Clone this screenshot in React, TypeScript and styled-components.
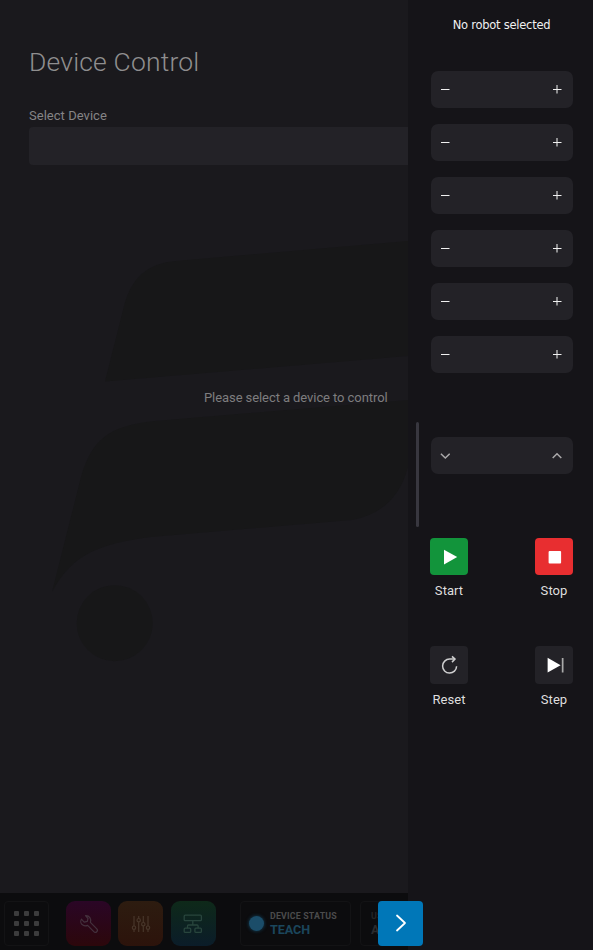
import React from "react";
import styled, { createGlobalStyle } from "styled-components";

const GlobalStyle = createGlobalStyle`
  * { box-sizing: border-box; }
  html, body { margin: 0; background: #151418; }
  body { font-family: Roboto, "Liberation Sans", sans-serif; overflow: hidden; }
  svg { display: block; }
`;

const Screen = styled.div`
  display: grid;
  grid-template-columns: 408px 185px;
  width: 593px;
  height: 950px;
  position: relative;
  overflow: hidden;
`;

const Workspace = styled.div`
  display: flex;
  flex-direction: column;
  min-width: 0;
  overflow: hidden;
`;

const Main = styled.main`
  position: relative;
  isolation: isolate;
  height: 893px;
  padding: 43px 0 0 29px;
  background: #1a191d;
  display: flex;
  flex-direction: column;
`;

const Watermark = styled.svg`
  position: absolute;
  inset: 0;
  z-index: -1;
`;

const Title = styled.h1`
  margin: 0;
  height: 63px;
  line-height: 38px;
  font-size: 26.5px;
  font-weight: 300;
  letter-spacing: 0.17px;
  color: #8f8e8f;
  white-space: nowrap;
`;

const Label = styled.label`
  height: 21px;
  line-height: 20px;
  font-size: 13px;
  letter-spacing: 0.03px;
  color: #858486;
`;

const DeviceSelect = styled.div`
  height: 38px;
  border-radius: 4px 0 0 4px;
  background: #232227;
`;

const Prompt = styled.p`
  margin: 223px 0 0 175px;
  line-height: 20px;
  font-size: 13px;
  letter-spacing: -0.08px;
  color: #7e7d7f;
  white-space: nowrap;
`;

const Taskbar = styled.footer`
  display: flex;
  align-items: flex-start;
  height: 57px;
  padding: 8px 0 0 4px;
  background: #0c0c0e;
`;

const Launcher = styled.div`
  display: grid;
  flex: none;
  grid-template-columns: repeat(3, 5px);
  grid-auto-rows: 5px;
  gap: 5px;
  place-content: center;
  width: 45px;
  height: 45px;
  margin-right: 17px;
  border: 1px solid #131315;
  border-radius: 4px;
`;

const Dot = styled.i`
  background: #3c3c3d;
  border-radius: 1px;
`;

const AppTile = styled.div<{ $from: string; $to: string }>`
  display: grid;
  flex: none;
  place-items: center;
  width: 45px;
  height: 45px;
  margin-right: 7.4px;
  border-radius: 9px;
  background: linear-gradient(${(p) => p.$from}, ${(p) => p.$to});
`;

const StatusCard = styled.div<{ $width: number; $margin: number }>`
  display: flex;
  align-items: center;
  flex: none;
  width: ${(p) => p.$width}px;
  height: 45px;
  margin-left: ${(p) => p.$margin}px;
  padding-left: 8px;
  border: 1px solid #131315;
  border-radius: 4px;
`;

const Lamp = styled.span`
  width: 15px;
  height: 15px;
  border-radius: 50%;
  background: #1b4d69;
  box-shadow: 0 0 3px 1px #102c3c;
  margin-right: 6px;
`;

const StatusText = styled.div<{ $dim?: boolean }>`
  display: flex;
  flex-direction: column;
  font-weight: 700;
  white-space: nowrap;
  opacity: ${(p) => (p.$dim ? 0.4 : 1)};
  padding-left: ${(p) => (p.$dim ? 2 : 0)}px;
`;

const StatusName = styled.span`
  font-size: 8.8px;
  line-height: 12px;
  letter-spacing: 0.2px;
  color: #4b4b4c;
`;

const StatusValue = styled.span<{ $color: string }>`
  font-size: 12.6px;
  line-height: 15px;
  letter-spacing: -0.05px;
  color: ${(p) => p.$color};
`;

const Drawer = styled.aside`
  position: relative;
  display: flex;
  flex-direction: column;
  padding: 15px 20.5px 0 22.5px;
  background: #151418;
`;

const DrawerTitle = styled.div`
  height: 56px;
  line-height: 21px;
  text-align: center;
  font-family: "DejaVu Sans", sans-serif;
  font-size: 11.5px;
  letter-spacing: -0.25px;
  color: #f0f0f0;
  white-space: nowrap;
`;

const JogList = styled.div`
  display: flex;
  flex-direction: column;
  gap: 16px;
`;

const JogControl = styled.div`
  display: flex;
  align-items: center;
  justify-content: space-between;
  height: 37px;
  padding: 0 10.5px 1px 9.5px;
  border-radius: 7px;
  background: #232227;
`;

const SpeedSlot = styled.div`
  margin-top: 64px;
`;

const Grip = styled.div`
  position: absolute;
  left: 7.5px;
  top: 422.4px;
  width: 3.5px;
  height: 105px;
  border-radius: 2px;
  background: #38373f;
`;

const ActionGrid = styled.div`
  display: grid;
  grid-template-columns: 38px 38px;
  justify-content: space-between;
  row-gap: 45px;
  margin: 63.5px -0.5px 0;
`;

const Action = styled.div`
  display: flex;
  flex-direction: column;
  align-items: center;
  gap: 6px;
  height: 63.5px;
  color: #dedede;
  font-size: 13px;
  line-height: 20px;
  letter-spacing: 0.05px;
`;

const ActionButton = styled.button<{ $bg: string }>`
  display: block;
  flex: none;
  width: 38px;
  height: 37.5px;
  padding: 0;
  border: 0;
  border-radius: 4px;
  background: ${(p) => p.$bg};
`;

const DrawerToggle = styled.button`
  position: absolute;
  left: 378px;
  top: 900.5px;
  display: grid;
  place-items: center;
  width: 45px;
  height: 45px;
  padding: 0;
  border: 0;
  border-radius: 4px;
  background: #0077b8;
`;

const Logo = () => (
  <Watermark width="408" height="893" viewBox="0 0 408 893" fill="#171718">
    <path d="M105 381.5 L124 306 Q134 264 176 261 L408 241 V356 Z" />
    <path d="M52 592 L79 485 C90 439 108 426 155 421 L408 400 V467 Q396 512 352 520 L151 537 C100 544 73 553 52 592 Z" />
    <circle cx="114.7" cy="623.2" r="38" />
  </Watermark>
);

const Minus = () => (
  <svg width="10" height="10" stroke="#f0f0f0"><path d="M1 5.5H9.5" /></svg>
);
const Plus = () => (
  <svg width="10" height="10" fill="none">
    <path d="M5 1V9.5" stroke="#8b8b8d" strokeWidth="2" />
    <path d="M1 5.5H9.5" stroke="#f0f0f0" />
  </svg>
);
const Chevron = ({ up }: { up?: boolean }) => (
  <svg width="10" height="10" fill="none" stroke="#aaa9aa" strokeWidth="1.5">
    <path d={up ? "M.7 8 5 3.7 9.3 8" : "M.9 3.7 5.3 8 9.7 3.7"} />
  </svg>
);

const PlayIcon = () => (
  <svg width="37.5" height="37.5" fill="#fff"><path d="M14 11.7 27.2 19.1 14 26.5Z" /></svg>
);
const StopIcon = () => (
  <svg width="37.5" height="37.5" fill="#fff"><rect x="13.6" y="13" width="12.5" height="12.5" rx="1" /></svg>
);
const ResetIcon = () => (
  <svg width="37.5" height="37.5" fill="none" stroke="#cfcfd0" strokeWidth="1.5">
    <path d="M26.6 20.3A7 7 0 1 1 19.6 13.1H24.4" />
    <path d="M22 10.4 25 13.1 22 16.1" />
  </svg>
);
const StepIcon = () => (
  <svg width="37.5" height="37.5" fill="#fff">
    <path d="M12.6 11.8 25.6 19.2 12.6 26.6Z" />
    <path d="M26.8 12h1.7v14.5h-1.7z" fill="#aaa" />
  </svg>
);

const WrenchIcon = () => (
  <svg width="22" height="22" viewBox="0 0 22 22" fill="none" stroke="#44313d" strokeWidth="1.2" strokeLinejoin="round">
    <path d="M7.5 2.6 10 5.5 9.3 8.4 6.2 9.1 3.4 6.2C2 8.5 3 11 4.8 12.1c1.5 1 3.3.9 4.8.3l6.2 6.3a2 2 0 0 0 3-2.9l-6.4-6.4C13.5 6 11.5 2.3 7.5 2.6Z" />
  </svg>
);
const SlidersIcon = () => (
  <svg width="20" height="20" viewBox="0 0 20 20" fill="none" stroke="#48362a" strokeWidth="1.2">
    <path d="M3 2v10M3 15.5V18M7.7 2v2.5M7.7 8v10M12.3 2v6.5M12.3 12v6M17 2v10M17 15.5V18" />
    <circle cx="3" cy="13.7" r="1.7" /><circle cx="7.7" cy="6.2" r="1.7" />
    <circle cx="12.3" cy="10.2" r="1.7" /><circle cx="17" cy="13.7" r="1.7" />
  </svg>
);
const NetworkIcon = () => (
  <svg width="20" height="20" viewBox="0 0 20 20" fill="none" stroke="#28453d" strokeWidth="1.3">
    <rect x="1.2" y="1.2" width="17.2" height="5.5" rx="1" />
    <rect x="1.2" y="14.2" width="6.5" height="4.2" rx="1" />
    <rect x="11.9" y="14.2" width="6.5" height="4.2" rx="1" />
    <path d="M9.8 6.7V11M4.5 14.2V12q0-1 1-1h8.6q1 0 1 1v2.2" />
  </svg>
);

const axes = [1, 2, 3, 4, 5, 6];
const actions = [
  { name: "Start", color: "#12943b", icon: <PlayIcon /> },
  { name: "Stop", color: "#e82e30", icon: <StopIcon /> },
  { name: "Reset", color: "#232227", icon: <ResetIcon /> },
  { name: "Step", color: "#232227", icon: <StepIcon /> },
];

export default function App() {
  return (
    <Screen>
      <GlobalStyle />
      <Workspace>
        <Main>
          <Logo />
          <Title>Device Control</Title>
          <Label>Select Device</Label>
          <DeviceSelect />
          <Prompt>Please select a device to control</Prompt>
        </Main>
        <Taskbar>
          <Launcher>{Array.from({ length: 9 }, (_, i) => <Dot key={i} />)}</Launcher>
          <AppTile $from="#2a0626" $to="#2c070b"><WrenchIcon /></AppTile>
          <AppTile $from="#2d1c10" $to="#2c130b"><SlidersIcon /></AppTile>
          <AppTile $from="#0e2919" $to="#0b1c29"><NetworkIcon /></AppTile>
          <StatusCard $width={111} $margin={16.8}>
            <Lamp />
            <StatusText>
              <StatusName>DEVICE STATUS</StatusName>
              <StatusValue $color="#1b465c">TEACH</StatusValue>
            </StatusText>
          </StatusCard>
          <StatusCard $width={111} $margin={9}>
            <StatusText $dim>
              <StatusName>USER</StatusName>
              <StatusValue $color="#5b5b5c">ADMIN</StatusValue>
            </StatusText>
          </StatusCard>
        </Taskbar>
      </Workspace>
      <Drawer>
        <DrawerTitle>No robot selected</DrawerTitle>
        <JogList>
          {axes.map((axis) => (
            <JogControl key={axis}><Minus /><Plus /></JogControl>
          ))}
        </JogList>
        <SpeedSlot>
          <JogControl><Chevron /><Chevron up /></JogControl>
        </SpeedSlot>
        <ActionGrid>
          {actions.map((a) => (
            <Action key={a.name}>
              <ActionButton $bg={a.color}>{a.icon}</ActionButton>
              {a.name}
            </Action>
          ))}
        </ActionGrid>
        <Grip />
      </Drawer>
      <DrawerToggle>
        <svg width="20" height="20" fill="none" stroke="#fff" strokeWidth="1.8" strokeLinecap="round" strokeLinejoin="round">
          <path d="M6 2.5 14 10 6 17.5" />
        </svg>
      </DrawerToggle>
    </Screen>
  );
}
